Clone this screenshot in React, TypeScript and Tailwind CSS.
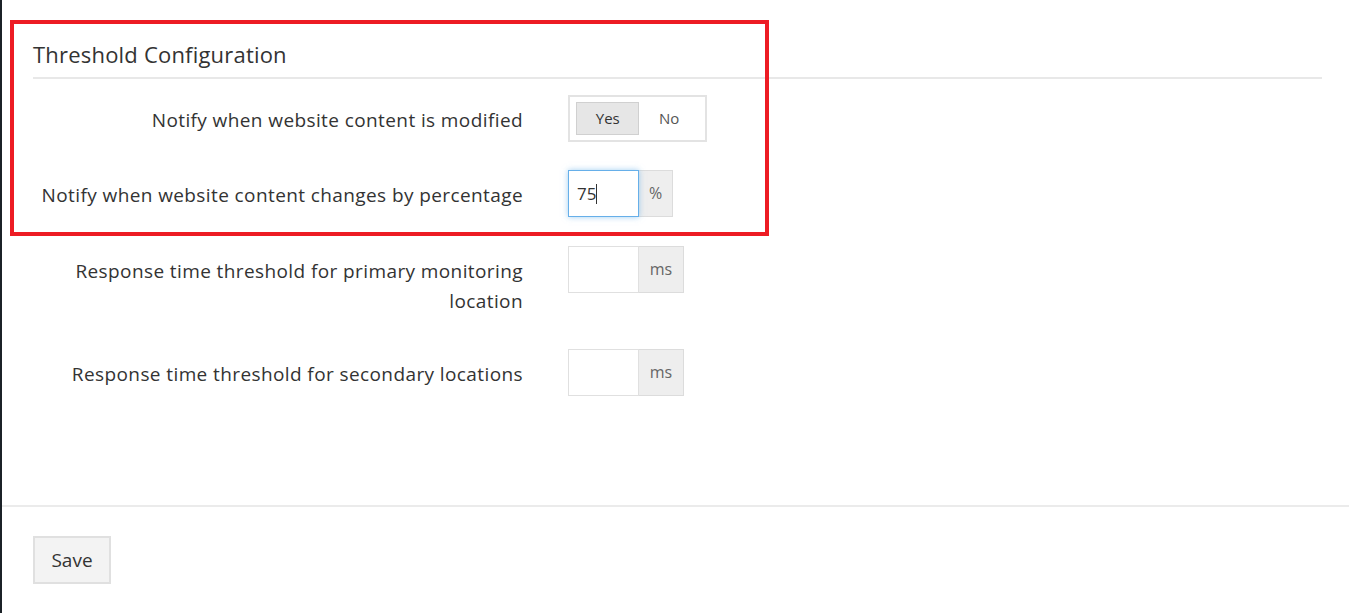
import React, { useState } from 'react';

const font = { fontFamily: '"Open Sans", Lato, sans-serif' };

const Field: React.FC<{ label: React.ReactNode; children: React.ReactNode; className?: string }> = ({ label, children, className }) => (
  <div className={`flex items-start ${className || ''}`}>
    <div className="w-[490px] shrink-0 text-right text-[19px] leading-[30px] tracking-[0.4px] text-[#333] pt-[10px]">{label}</div>
    <div className="ml-[45px]">{children}</div>
  </div>
);

const UnitInput: React.FC<{ value?: string; unit: string; focused?: boolean; unitWidth: string }> = ({ value, unit, focused, unitWidth }) => (
  <div className="flex h-[47px]">
    <div
      className={`w-[71px] h-full border flex items-center px-2 text-[17px] text-[#333] ${
        focused ? 'border-[#66afe9] shadow-[0_0_6px_rgba(102,175,233,0.6)] relative z-10' : 'border-[#e0e0e0]'
      }`}
    >
      {value}
      {focused && <span className="w-px h-[20px] bg-[#333]"></span>}
    </div>
    <div className={`${unitWidth} h-full bg-[#eeeeee] border border-[#dcdcdc] border-l-0 flex items-start justify-center pt-[10px] text-[16px] text-[#666]`}>
      {unit}
    </div>
  </div>
);

export default function App() {
  const [notify, setNotify] = useState<'yes' | 'no'>('yes');

  return (
    <div style={font} className="relative w-[1349px] h-[613px] bg-white overflow-hidden flex">
      <div className="w-[2px] h-full bg-[#1b2127] shrink-0"></div>

      <div className="flex-1 flex flex-col">
        <div className="pl-[31px] pr-[27px] h-[505px]">
          <h2 className="pt-[40px] text-[22px] leading-[28px] tracking-[0.2px] text-[#333]">Threshold Configuration</h2>
          <div className="mt-[9px] h-[2px] bg-[#e8e8e8]"></div>

          <Field className="mt-[16px]" label="Notify when website content is modified">
            <div className="w-[139px] h-[47px] border-2 border-[#e3e3e3] flex items-center px-[6px]">
              <button
                onClick={() => setNotify('yes')}
                className={`w-[64px] h-[33px] text-[15px] text-[#333] border ${notify === 'yes' ? 'bg-[#e6e6e6] border-[#d0d0d0]' : 'border-transparent'}`}
              >
                Yes
              </button>
              <button
                onClick={() => setNotify('no')}
                className={`w-[60px] h-[33px] text-[15px] text-[#555] border ${notify === 'no' ? 'bg-[#e6e6e6] border-[#d0d0d0]' : 'border-transparent'}`}
              >
                No
              </button>
            </div>
          </Field>

          <Field className="mt-[28px]" label="Notify when website content changes by percentage">
            <UnitInput value="75" unit="%" focused unitWidth="w-[34px]" />
          </Field>

          <Field
            className="mt-[29px]"
            label={
              <>
                Response time threshold for primary monitoring
                <br />
                location
              </>
            }
          >
            <UnitInput unit="ms" unitWidth="w-[45px]" />
          </Field>

          <Field className="mt-[33px]" label="Response time threshold for secondary locations">
            <UnitInput unit="ms" unitWidth="w-[45px]" />
          </Field>
        </div>

        <div className="h-[2px] bg-[#ebebeb]"></div>

        <div className="pl-[31px] pt-[29px]">
          <button className="w-[78px] h-[48px] bg-[#f3f3f3] border-2 border-[#e0e0e0] text-[19px] text-[#333]">Save</button>
        </div>
      </div>

      <div className="absolute left-[10px] top-[20px] w-[759px] h-[216px] border-4 border-[#ed1c24] pointer-events-none"></div>
    </div>
  );
}
